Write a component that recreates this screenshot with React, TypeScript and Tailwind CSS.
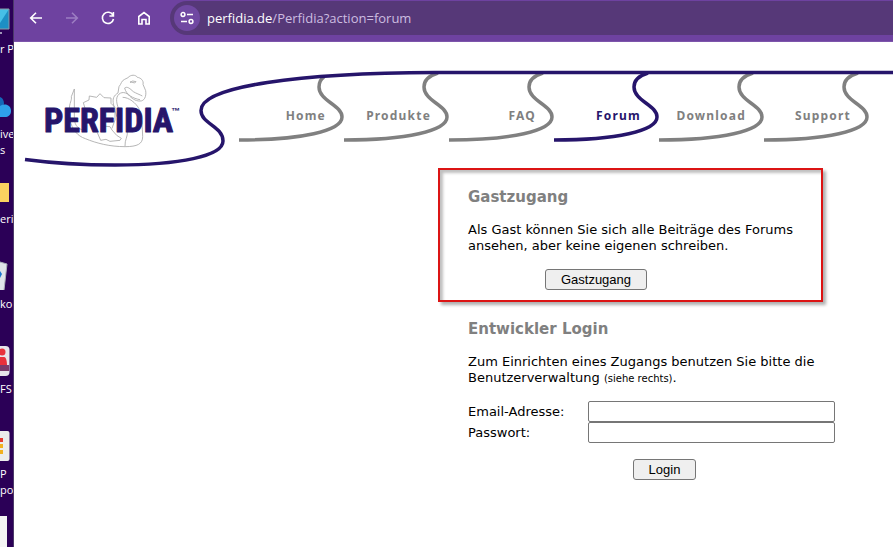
import type { ReactNode } from "react";

type Item = { label: string; art: ReactNode };

const desktopItems: Item[] = [
  {
    label: "r PC",
    art: (
      <>
        <path d="M0 4h9v20H0z" fill="#1c8fc4" />
        <path d="M0 4h9L0 18z" fill="#46bfe6" />
        <path d="M0 4h9v20H0" fill="none" stroke="#8a9aa6" />
        <path d="M0 28h2" stroke="#c8c8d8" strokeWidth="1.5" />
      </>
    ),
  },
  {
    label: "ive s",
    art: (
      <>
        <path d="M0 7c3 1 4 4 4 7l-4 8z" fill="#1467b8" />
        <path d="M0 16c5-3 11-1 11 5 0 4-3 6-6 6H0z" fill="#2ea0ea" />
      </>
    ),
  },
  { label: "eri", art: <path d="M0 8h9v19H0z" fill="#fbd160" /> },
  {
    label: "kor",
    art: (
      <>
        <path d="M0 2l7 2-3 26H0z" fill="#dfe4ea" />
        <path d="M0 11l2 3-2 4z" fill="#1b78d0" />
        <path d="M0 2l7 2-3 26" fill="none" stroke="#a9aeb8" />
      </>
    ),
  },
  {
    label: "FS",
    art: (
      <>
        <rect x="-12" y="1" width="21.500" height="30" rx="4" fill="#e7e4ea" />
        <circle cx="2" cy="7" r="3.500" fill="#e8313c" />
        <path d="M0 12h4c3 0 3 8 3 8H0z" fill="#e8313c" />
        <path d="M0 20h9v6H0z" fill="#7a3b6b" />
      </>
    ),
  },
  {
    label: "P poi",
    art: (
      <>
        <rect x="-12" y="1" width="21.500" height="30" rx="2" fill="#ececec" />
        <path d="M0 8h3v4H0z" fill="#e53a30" />
        <path d="M0 14h3v4H0zM0 20h3v4H0z" fill="#f2b01e" />
      </>
    ),
  },
  { label: "", art: <path d="M0 1h7v31H0z" fill="#f4f4f4" /> },
];

function Desktop() {
  return (
    <aside className="flex w-3.5 shrink-0 flex-col overflow-hidden border-r border-[#4b3a68] bg-[#2b0057] pt-[5px]">
      {desktopItems.map((item, i) => (
        <div key={i} className="h-[85px] shrink-0">
          <svg className="block h-8 w-3.5" aria-hidden="true">
            {item.art}
          </svg>
          <div className="mt-1 flex flex-col font-['Open_Sans','Noto_Sans',sans-serif] text-[11px] leading-4 text-white">
            {item.label.startsWith("r ") ? (
              <span className="whitespace-nowrap">{item.label}</span>
            ) : (
              item.label.split(" ").map((word) => <span key={word}>{word}</span>)
            )}
          </div>
        </div>
      ))}
    </aside>
  );
}

function ToolButton({ label, dim, children }: { label: string; dim?: boolean; children: ReactNode }) {
  return (
    <button
      type="button"
      aria-label={label}
      disabled={dim}
      className="flex size-5 items-center justify-center text-white disabled:text-[#9c7dc2]"
    >
      <svg viewBox="0 0 16 16" className="size-4" fill="none" stroke="currentColor" strokeWidth="1.6" aria-hidden="true">
        {children}
      </svg>
    </button>
  );
}

function Toolbar() {
  return (
    <div className="flex h-[42px] items-center border-b border-[#7d55ab] bg-[#6e42a0] pb-1.5 pl-3">
      <div className="flex shrink-0 gap-4">
        <ToolButton label="Zurück">
          <path d="M14 8H3M8 2.700 2.700 8 8 13.300" />
        </ToolButton>
        <ToolButton label="Vorwärts" dim>
          <path d="M2 8h11M8 2.700 13.300 8 8 13.300" />
        </ToolButton>
        <ToolButton label="Neu laden">
          <path d="M13 5.300A5.600 5.600 0 1 0 13.500 9M13.400 2v4h-4" />
        </ToolButton>
        <ToolButton label="Startseite">
          <path d="M2.800 14V6.500L8 2.500l5.200 4V14H10V9.500H6V14z" />
        </ToolButton>
      </div>
      <div className="-mr-8 ml-4 flex h-[34px] grow items-center gap-[7px] rounded-full bg-[#563878] pl-1">
        <button
          type="button"
          aria-label="Websiteinformationen"
          className="flex size-[26px] items-center justify-center rounded-full bg-[#7048a2] text-white"
        >
          <svg viewBox="0 0 16 16" className="size-4" fill="none" stroke="currentColor" strokeWidth="1.500" aria-hidden="true">
            <circle cx="4" cy="4.500" r="1.900" />
            <path d="M8 4.500h6M2 11.500h6" />
            <circle cx="12" cy="11.500" r="1.900" />
          </svg>
        </button>
        <div
          role="textbox"
          aria-label="Adresse"
          className="font-['Open_Sans','Noto_Sans',sans-serif] text-[13px] leading-5 text-[#cdbde0]"
        >
          <span className="text-white">perfidia.de</span>/Perfidia?action=forum
        </div>
      </div>
    </div>
  );
}

const navItems = ["Home", "Produkte", "FAQ", "Forum", "Download", "Support"];

function Logo() {
  return (
    <svg className="block h-[126px] w-56 shrink-0" viewBox="0 0 224 126" role="img" aria-label="Perfidia">
      <g transform="translate(26 28) scale(.33333)" fill="none" stroke="#aaa" strokeWidth="2.600" strokeLinejoin="round">
        <path d="M88 118C88 98 96 92 94 80L103 57V145C104 170 118 180 140 182" />
        <path d="M90 150C96 178 112 198 136 206C170 220 210 230 255 230C292 230 308 222 308 200C307 174 306 140 298 118C288 98 266 82 248 82" />
        <path d="M136 118L130 98L147 90L148 78L170 82L180 71L192 83L213 84L213 100L225 112V150L216 175" />
        <path d="M230 140L221 105C216 86 222 76 234 69L237 50C244 42 244 32 254 28L264 23C272 13 288 14 292 22C302 23 312 32 309 43L317 62C320 80 312 94 300 93C286 94 274 84 266 75C254 63 236 66 231 82C226 98 238 120 244 140" />
        <path d="M254 54C262 48 270 56 280 65C288 70 300 74 307 78M254 54C258 74 280 86 300 89M270 35L284 39L288 35L278 33L270 38" />
        <path d="M172 188L182 211L198 208L210 214L240 211L244 205L230 196L216 180L210 170L186 168M255 229C254 208 264 200 262 184" />
      </g>
      <text
        x="30"
        y="90"
        fill="#26156b"
        stroke="#26156b"
        strokeWidth="1"
        strokeLinejoin="round"
        className="font-['Liberation_Sans_Narrow','Roboto_Condensed','Roboto',sans-serif] text-[34px] font-bold"
      >
        PERFIDIA
      </text>
      <text x="157" y="72" fill="#26156b" className="font-['Liberation_Sans',sans-serif] text-[9px] font-bold">
        ™
      </text>
    </svg>
  );
}

function Header() {
  return (
    <header className="relative flex h-[126px] overflow-hidden">
      <Logo />
      <nav aria-label="Hauptnavigation" className="flex">
        {navItems.map((name, i) => {
          const active = name === "Forum";
          return (
            <a
              key={name}
              href="#"
              className={`relative flex w-[105px] shrink-0 justify-end pt-16 pr-[17px] font-['Noto_Sans','Open_Sans',sans-serif] text-xs leading-5 font-bold tracking-widest ${
                active ? "text-[#26156b]" : "text-[#808080]"
              }`}
            >
              <svg className="absolute inset-0 h-[126px] w-[105px] overflow-visible" fill="none" stroke="currentColor" aria-hidden="true">
                <path
                  d={
                    i === 0
                      ? "M86 35C83 37 81 41 81 45C81 59 104 63 104 75C104 89 63 98 1 98"
                      : "M95 31C85 34 81 39 81 45C81 59 104 63 104 75C104 89 63 98 1 98"
                  }
                  strokeWidth="3.500"
                />
              </svg>
              {name}
            </a>
          );
        })}
      </nav>
      <svg className="pointer-events-none absolute inset-0 size-full" fill="none" aria-hidden="true">
        <path
          d="M11 117.500C45 122 75 123 101 123C166 123 209 114 209 99C209 84 187 82 187 68.500C187 44 286 31 421 30.500H4000"
          stroke="#26156b"
          strokeWidth="3.500"
        />
      </svg>
    </header>
  );
}

const titleClass = "text-[15px] leading-5 font-bold text-[#808080]";
const buttonClass =
  "block h-[21px] rounded-[3px] border border-[#767676] bg-[#efefef] font-['Liberation_Sans',Arial,sans-serif] text-[13px] leading-[19px] text-black";
const inputClass = "h-[21px] w-[247px] rounded-[2px] border border-[#767676] bg-white px-1";

export default function App() {
  return (
    <div className="flex h-screen overflow-hidden bg-white">
      <Desktop />
      <div className="min-w-0 grow">
        <Toolbar />
        <Header />
        <main className="pl-[424px] font-['DejaVu_Sans',Verdana,sans-serif] text-[13px] leading-4 text-black">
          <section className="w-[385px] border-2 border-[#dc1414] pt-[17px] pr-6 pb-2.5 pl-7 shadow-[3px_3px_3px_#00000050,inset_3px_3px_3px_#00000040]">
            <h2 className={titleClass}>Gastzugang</h2>
            <p className="mt-[15px]">
              Als Gast können Sie sich alle Beiträge des Forums ansehen, aber keine eigenen schreiben.
            </p>
            <div className="mt-[15px] pl-[77px]">
              <button type="button" className={`${buttonClass} w-[102px]`}>
                Gastzugang
              </button>
            </div>
          </section>
          <section className="mt-[17px] w-[423px] pl-[30px]">
            <h2 className={titleClass}>Entwickler Login</h2>
            <p className="mt-[15px] h-8 w-[367px]">
              Zum Einrichten eines Zugangs benutzen Sie bitte die Benutzerverwaltung{" "}
              <small className="text-[10px] leading-none">(siehe rechts)</small>.
            </p>
            <form className="mt-[15px]" onSubmit={(e) => e.preventDefault()}>
              <div className="flex items-center">
                <label htmlFor="email" className="w-[120px]">Email-Adresse:</label>
                <input id="email" type="email" className={inputClass} />
              </div>
              <div className="flex items-center">
                <label htmlFor="password" className="w-[120px]">Passwort:</label>
                <input id="password" type="password" className={inputClass} />
              </div>
              <button type="submit" className={`${buttonClass} mx-auto mt-4 w-[63px]`}>
                Login
              </button>
            </form>
          </section>
        </main>
      </div>
    </div>
  );
}
